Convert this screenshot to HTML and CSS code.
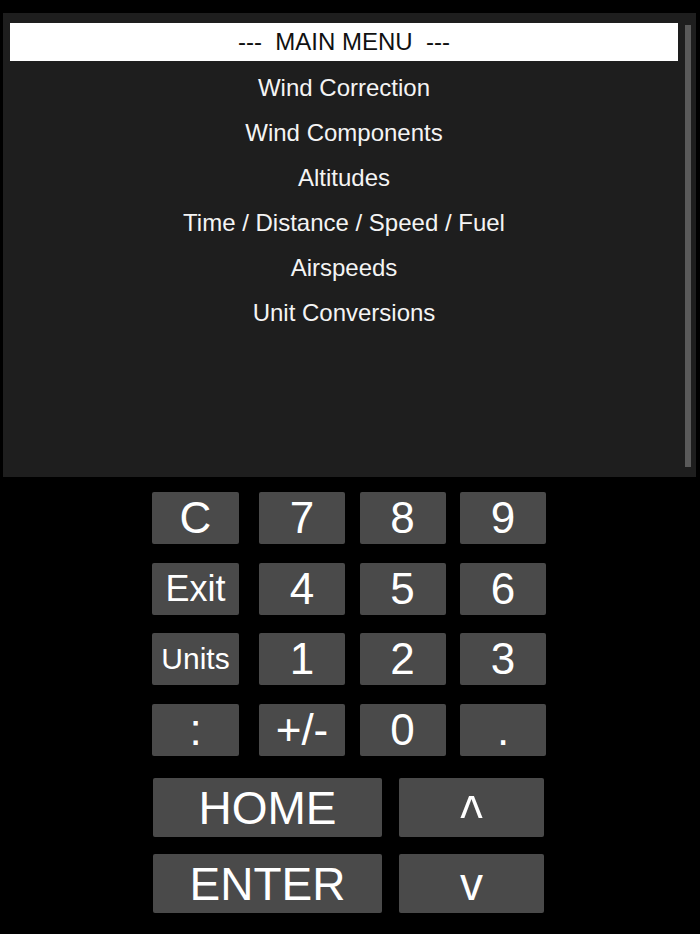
FILE: index.html
```html
<!DOCTYPE html>
<html>
<head>
<meta charset="utf-8">
<link rel="stylesheet" href="styles.css">
</head>
<body>
<div class="screen">
  <div class="menu">
    <div class="menu-title">---  MAIN MENU  ---</div>
    <div class="menu-item">Wind Correction</div>
    <div class="menu-item">Wind Components</div>
    <div class="menu-item">Altitudes</div>
    <div class="menu-item">Time / Distance / Speed / Fuel</div>
    <div class="menu-item">Airspeeds</div>
    <div class="menu-item">Unit Conversions</div>
  </div>
  <div class="scrollbar"></div>
</div>
<div class="keypad">
  <div class="keys">
    <button class="key first">C</button>
    <button class="key">7</button>
    <button class="key">8</button>
    <button class="key">9</button>
    <button class="key first exit">Exit</button>
    <button class="key">4</button>
    <button class="key">5</button>
    <button class="key">6</button>
    <button class="key first units">Units</button>
    <button class="key">1</button>
    <button class="key">2</button>
    <button class="key">3</button>
    <button class="key first">:</button>
    <button class="key">+/-</button>
    <button class="key">0</button>
    <button class="key">.</button>
  </div>
  <div class="nav">
    <button class="key big">HOME</button>
    <button class="key arrow"><span class="caret">^</span></button>
    <button class="key big">ENTER</button>
    <button class="key arrow">v</button>
  </div>
</div>
</body>
</html>
```
FILE: styles.css
```css
html, body {
  margin: 0;
  padding: 0;
  background: #000;
}
body {
  font-family: "Liberation Sans", Arial, sans-serif;
  width: 700px;
  height: 934px;
  overflow: hidden;
}
.screen {
  margin: 13px 0 0 3px;
  width: 693px;
  height: 464px;
  background: #1e1e1e;
  display: flex;
  align-items: flex-start;
}
.menu {
  margin: 10px 0 0 7px;
  width: 668px;
}
.menu-title {
  height: 38px;
  line-height: 38px;
  background: #fff;
  color: #111;
  text-align: center;
  font-size: 24px;
  white-space: pre;
}
.menu-item {
  height: 45px;
  line-height: 45px;
  color: #f4f4f4;
  text-align: center;
  font-size: 24px;
}
.menu-title + .menu-item {
  margin-top: 4px;
}
.scrollbar {
  margin: 12px 0 0 7px;
  width: 6px;
  height: 442px;
  background: #5a5a5a;
}
.keypad {
  width: 394px;
  margin: 15px 0 0 152px;
}
.keys {
  display: grid;
  grid-template-columns: 92.5px 86px 86px 86px;
  grid-auto-rows: 52px;
  column-gap: 14.5px;
  row-gap: 18.5px;
}
.key {
  border: none;
  margin: 0;
  padding: 0;
  background: #4a4a4a;
  color: #fff;
  border-radius: 2px;
  font-family: "Liberation Sans", Arial, sans-serif;
  font-size: 44px;
  line-height: 1;
  display: flex;
  align-items: center;
  justify-content: center;
}
.key.first {
  width: 87px;
}
.key.exit {
  font-size: 36px;
}
.key.units {
  font-size: 30px;
}
.nav {
  margin-top: 22.5px;
  display: grid;
  grid-template-columns: 229px 145px;
  grid-auto-rows: 59px;
  column-gap: 17px;
  row-gap: 17px;
  padding-left: 1px;
}
.key.big {
  font-size: 46px;
}
.key.arrow {
  font-size: 46px;
}
.caret {
  display: inline-block;
  font-size: 48px;
  line-height: 1;
  transform: translateY(10px) scaleY(1.26);
}
```
